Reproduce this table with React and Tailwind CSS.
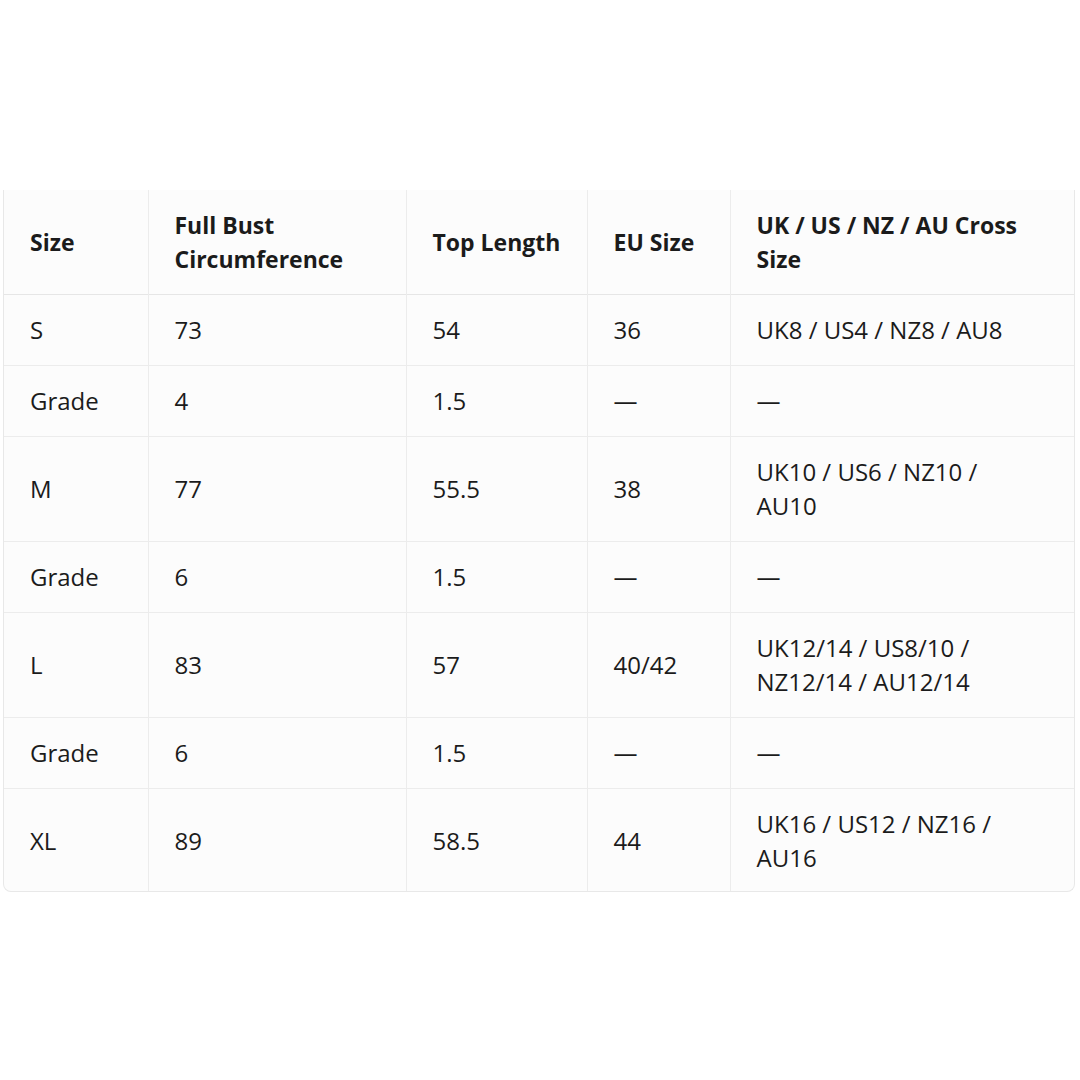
import React from "react";

const headers = [["Size"], ["Full Bust", "Circumference"], ["Top Length"], ["EU Size"], ["UK / US / NZ / AU Cross", "Size"]];

const rows = [
  ["S", "73", "54", "36", ["UK8 / US4 / NZ8 / AU8"]],
  ["Grade", "4", "1.5", "—", ["—"]],
  ["M", "77", "55.5", "38", ["UK10 / US6 / NZ10 /", "AU10"]],
  ["Grade", "6", "1.5", "—", ["—"]],
  ["L", "83", "57", "40/42", ["UK12/14 / US8/10 /", "NZ12/14 / AU12/14"]],
  ["Grade", "6", "1.5", "—", ["—"]],
  ["XL", "89", "58.5", "44", ["UK16 / US12 / NZ16 /", "AU16"]],
];

const widths = ["w-[144px]", "w-[258px]", "w-[181px]", "w-[143px]", "w-[346px]"];

function Lines({ value }) {
  const lines = Array.isArray(value) ? value : [value];
  return lines.map((l, i) => (
    <span key={i} className="block whitespace-nowrap">
      {l}
    </span>
  ));
}

export default function App() {
  return (
    <div className="w-[1080px] h-[1080px] bg-white pt-[190px] pl-[3px] pr-[5px] font-['Open_Sans',sans-serif] text-[#1b1b1b]">
      <div className="rounded-b-lg border-x border-b border-[#e8e8e8] bg-[#fcfcfc] overflow-hidden">
        <table className="w-full table-fixed border-collapse leading-[34px]">
          <colgroup>
            {widths.map((w, i) => (
              <col key={i} className={w} />
            ))}
          </colgroup>
          <thead>
            <tr className="border-b border-[#e6e6e6]">
              {headers.map((h, i) => (
                <th
                  key={i}
                  className={`text-left align-middle text-[23px] font-bold pl-[26px] pr-2 py-[18px] ${i > 0 ? "border-l border-[#ececec]" : ""}`}
                >
                  <Lines value={h} />
                </th>
              ))}
            </tr>
          </thead>
          <tbody>
            {rows.map((r, ri) => (
              <tr key={ri} className={ri < rows.length - 1 ? "border-b border-[#ececec]" : ""}>
                {r.map((c, ci) => (
                  <td
                    key={ci}
                    className={`align-middle text-[24px] pl-[26px] pr-2 ${ri === rows.length - 1 ? "pt-[18px] pb-[16px]" : "py-[18px]"} ${ci > 0 ? "border-l border-[#ececec]" : ""}`}
                  >
                    <Lines value={c} />
                  </td>
                ))}
              </tr>
            ))}
          </tbody>
        </table>
      </div>
    </div>
  );
}
